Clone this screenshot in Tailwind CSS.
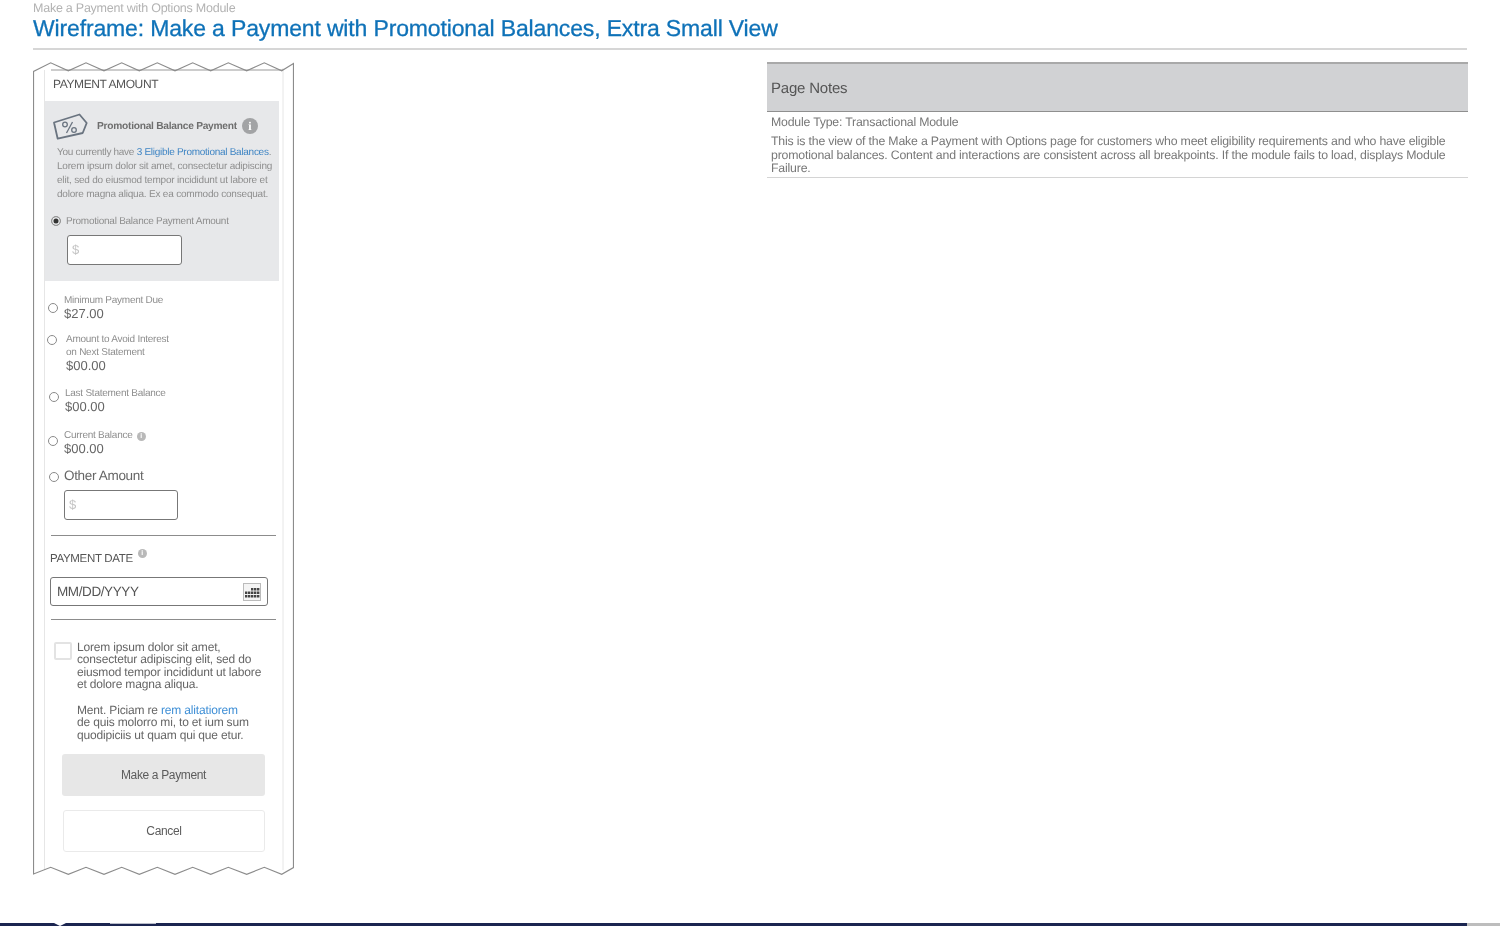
<!DOCTYPE html>
<html lang="en">
<head>
  <meta charset="UTF-8" />
  <meta name="viewport" content="width=device-width, initial-scale=1.0"/>
  <title>Wireframe: Make a Payment</title>
  <script src="https://cdn.jsdelivr.net/npm/@tailwindcss/browser@4"></script>
</head>
<body class="bg-white font-['Liberation_Sans',Arial,sans-serif] [text-rendering:geometricPrecision]">
  <div class="h-[926px] overflow-hidden flex flex-col blur-[0.35px]">
    <!-- page heading -->
    <header class="mx-[33px] h-[50px] border-b-2 border-[#d6d6d6]">
      <p class="text-[12.5px] tracking-[-0.24px] leading-[16px] text-[#b3b3b3]">Make a Payment with Options Module</p>
      <h1 class="-mt-[1px] text-[23px] tracking-[-0.15px] leading-[26px] text-[#0f72b8] [-webkit-text-stroke:0.3px_#0f72b8]">Wireframe: Make a Payment with Promotional Balances, Extra Small View</h1>
    </header>

    <main class="flex-1 flex items-start pl-[33px] pt-[12px]">
      <!-- torn paper wireframe -->
      <section class="relative w-[261px] h-[814px] shrink-0 text-[#666]">
        <svg class="absolute left-0 top-0 pointer-events-none" width="261" height="814" viewBox="33 62 261 814" fill="none">
          <path d="M44.5 70 V870 M283 68 V870" stroke="#e6e6e6"/>
          <path d="M51 70 H283" stroke="#999"/>
          <path d="M33.5 874 V71.5 L50.7 62.8 L68.3 70.8 L86 62.8 L104 70.8 L121.7 62.8 L139.3 70.8 L157.3 62.8 L175 70.8 L192.7 62.8 L210.7 70.8 L228.3 62.8 L246.7 70.8 L264.3 62.8 L281.7 70.8 L293.5 63.5 V867.5 L281.7 874.3 L264.3 867.3 L246.7 874.3 L228.3 867.3 L210.7 874.3 L192.7 867.3 L175 874.3 L157.3 867.3 L139.3 874.3 L121.7 867.3 L104 874.3 L86 867.3 L68.3 874.3 L50.7 867.3 Z" stroke="#8c8c8c" stroke-width="1.2"/>
        </svg>

        <div class="relative pt-[15px]">
          <h2 class="ml-[20px] text-[12px] tracking-[-0.4px] leading-[14px] text-[#555]">PAYMENT AMOUNT</h2>

          <div class="ml-[12px] mt-[10px] w-[234px] h-[180px] bg-[#e7e8ea] pt-[12px]">
            <div class="flex items-center h-[26px] ml-[7px]">
              <svg class="w-[36px] h-[26px] overflow-visible shrink-0" viewBox="52 115 36 26" fill="none" stroke="#6a7480" stroke-width="1.8" stroke-linejoin="round">
                <path d="M54 124.5 L79.5 116.5 L86.7 125 L82.7 135 L57.7 140.7 Z"/>
                <path d="M72.5 124 L66.5 135" stroke-width="1.3"/>
                <circle cx="65" cy="126.5" r="2.3" stroke-width="1.3"/>
                <circle cx="74" cy="132" r="2.3" stroke-width="1.3"/>
              </svg>
              <span class="ml-[9px] pt-[2px] text-[10.2px] tracking-[-0.25px] leading-[14px] font-bold text-[#6e6e6e]">Promotional Balance Payment</span>
              <span class="ml-[5px] w-[16px] h-[16px] rounded-full bg-[#a2a3a5] text-white text-[12px] leading-[16px] font-bold text-center font-['Liberation_Serif',serif]">i</span>
            </div>
            <p class="ml-[12px] mt-[7px] text-[10px] tracking-[-0.2px] leading-[14px] text-[#8e8e8e] whitespace-nowrap"><span class="tracking-[-0.3px]">You currently have</span> <a class="tracking-[-0.28px] text-[#3f85c4]">3 Eligible Promotional Balances</a>.<br>Lorem ipsum dolor sit amet, consectetur adipiscing<br>elit, sed do eiusmod tempor incididunt ut labore et<br>dolore magna aliqua. Ex ea commodo consequat.</p>
            <div class="flex items-center ml-[6px] mt-[12px] h-[14px]">
              <span class="w-[10px] h-[10px] rounded-full border border-[#999] bg-[#333] [box-shadow:inset_0_0_0_1.5px_#e7e8ea]"></span>
              <span class="ml-[5px] text-[10px] tracking-[-0.25px] text-[#8e8e8e]">Promotional Balance Payment Amount</span>
            </div>
            <div class="ml-[22px] mt-[7px] w-[115px] h-[30px] rounded-[3px] border border-[#777] bg-white pl-[4px] text-[13px] leading-[28px] text-[#c4c4c4]">$</div>
          </div>

          <div class="flex items-start ml-[15px] mt-[14px] gap-[6px]">
            <span class="mt-[8px] w-[10px] h-[10px] rounded-full border border-[#8a8a8a]"></span>
            <div>
              <p class="text-[10px] tracking-[-0.25px] leading-[12px] text-[#8e8e8e]">Minimum Payment Due</p>
              <p class="text-[13px] leading-[14px] text-[#666]">$27.00</p>
            </div>
          </div>
          <div class="flex items-start ml-[14px] mt-[12px] gap-[9px]">
            <span class="mt-[2px] w-[10px] h-[10px] rounded-full border border-[#8a8a8a]"></span>
            <div>
              <p class="text-[10px] tracking-[-0.25px] leading-[13px] text-[#8e8e8e]">Amount to Avoid Interest<br>on Next Statement</p>
              <p class="text-[13px] leading-[14px] text-[#666]">$00.00</p>
            </div>
          </div>
          <div class="flex items-start ml-[16px] mt-[15px] gap-[6px]">
            <span class="mt-[4px] w-[10px] h-[10px] rounded-full border border-[#8a8a8a]"></span>
            <div>
              <p class="text-[10px] tracking-[-0.25px] leading-[12px] text-[#8e8e8e]">Last Statement Balance</p>
              <p class="text-[13px] leading-[14px] text-[#666]">$00.00</p>
            </div>
          </div>
          <div class="flex items-start ml-[15px] mt-[16px] gap-[6px]">
            <span class="mt-[6px] w-[10px] h-[10px] rounded-full border border-[#8a8a8a]"></span>
            <div>
              <p class="flex items-center text-[10px] tracking-[-0.25px] leading-[12px] text-[#8e8e8e]">Current Balance<span class="ml-[4px] w-[9px] h-[9px] rounded-full bg-[#b9b9b9] text-white text-[7px] leading-[9px] font-bold text-center">i</span></p>
              <p class="text-[13px] leading-[14px] text-[#666]">$00.00</p>
            </div>
          </div>
          <div class="flex items-start ml-[16px] mt-[12px] gap-[5px]">
            <span class="mt-[4px] w-[10px] h-[10px] rounded-full border border-[#8a8a8a]"></span>
            <p class="text-[13.5px] tracking-[-0.33px] leading-[16px] text-[#666]">Other Amount</p>
          </div>
          <div class="ml-[31px] mt-[6px] w-[114px] h-[30px] rounded-[3px] border border-[#777] pl-[4px] text-[13px] leading-[28px] text-[#c4c4c4]">$</div>

          <div class="ml-[18px] mt-[15px] w-[225px] h-[1px] bg-[#8c8c8c]"></div>

          <div class="flex items-start ml-[17px] mt-[16px] h-[14px]">
            <span class="text-[11.5px] tracking-[-0.33px] leading-[14px] text-[#555]">PAYMENT DATE</span>
            <span class="ml-[5px] -mt-[3px] w-[9px] h-[9px] rounded-full bg-[#b9b9b9] text-white text-[7px] leading-[9px] font-bold text-center">i</span>
          </div>
          <div class="flex items-center justify-between ml-[17px] mt-[11px] w-[218px] h-[29px] rounded-[3px] border border-[#777] pl-[6px] pr-[6px]">
            <span class="mt-[2px] text-[13.5px] tracking-[-0.4px] text-[#555]">MM/DD/YYYY</span>
            <svg class="w-[18px] h-[18px]" viewBox="0 0 18 18">
              <rect x="0.5" y="0.5" width="17" height="17" fill="#f4f4f4" stroke="#bbb"/>
              <path d="M8 5h2.4v2.4H8zM11 5h2.4v2.4H11zM14 5h2.4v2.4H14zM2 8.5h2.4v2.4H2zM5 8.5h2.4v2.4H5zM8 8.5h2.4v2.4H8zM11 8.5h2.4v2.4H11zM14 8.5h2.4v2.4H14zM2 12h2.4v2.4H2zM5 12h2.4v2.4H5zM8 12h2.4v2.4H8zM11 12h2.4v2.4H11zM14 12h2.4v2.4H14z" fill="#444"/>
            </svg>
          </div>
          <div class="ml-[18px] mt-[13px] w-[225px] h-[1px] bg-[#8c8c8c]"></div>

          <div class="flex items-start ml-[21px] mt-[21px] gap-[5px]">
            <span class="mt-[1px] w-[18px] h-[18px] rounded-[2px] border-2 border-[#e3e3e3] shrink-0"></span>
            <div class="text-[12px] tracking-[-0.17px] leading-[12.25px] text-[#666] whitespace-nowrap">
              <p>Lorem ipsum dolor sit amet,<br>consectetur adipiscing elit, sed do<br>eiusmod tempor incididunt ut labore<br>et dolore magna aliqua.</p>
              <p class="mt-[14px]">Ment. Piciam re <a class="text-[#3f8fd6]">rem alitatiorem</a><br>de quis molorro mi, to et ium sum<br>quodipiciis ut quam qui que etur.</p>
            </div>
          </div>

          <button class="block ml-[29px] mt-[13px] w-[203px] h-[42px] rounded-[3px] bg-[#e7e7e7] text-[12px] tracking-[-0.35px] text-[#5c5c5c]">Make a Payment</button>
          <button class="block ml-[30px] mt-[14px] w-[202px] h-[42px] rounded-[3px] border border-[#eaeaea] bg-white text-[12px] tracking-[-0.35px] text-[#5c5c5c]">Cancel</button>
        </div>
      </section>

      <!-- notes -->
      <aside class="ml-[473px] w-[701px] border-b border-[#d4d4d4] text-[#777] pb-[1px]">
        <div class="h-[50px] border-t-2 border-b border-t-[#a9a9a9] border-b-[#8f8f8f] bg-[#d1d2d4] pl-[4px] text-[15px] tracking-[-0.2px] leading-[50px] text-[#555]">Page Notes</div>
        <p class="mt-[3px] pl-[4px] text-[12.3px] tracking-[-0.2px] leading-[14px]">Module Type: Transactional Module</p>
        <p class="mt-[6px] pl-[4px] text-[12.3px] tracking-[-0.18px] leading-[13.5px] whitespace-nowrap">This is the view of the Make a Payment with Options page for customers who meet eligibility requirements and who have eligible<br>promotional balances. Content and interactions are consistent across all breakpoints. If the module fails to load, displays Module<br>Failure.</p>
      </aside>
    </main>

    <!-- cut-off footer bar -->
    <div class="relative h-[3px] flex">
      <div class="flex-1 bg-[#1b2550]"></div>
      <div class="w-[33px] bg-[#bdbdbd]"></div>
      <div class="absolute left-[110px] top-0 w-[46px] h-[1px] bg-[#b9bcc9]"></div>
      <div class="absolute left-[54px] top-0 w-0 h-0 border-x-[6px] border-x-transparent border-t-[3px] border-t-white"></div>
    </div>
  </div>
</body>
</html>
